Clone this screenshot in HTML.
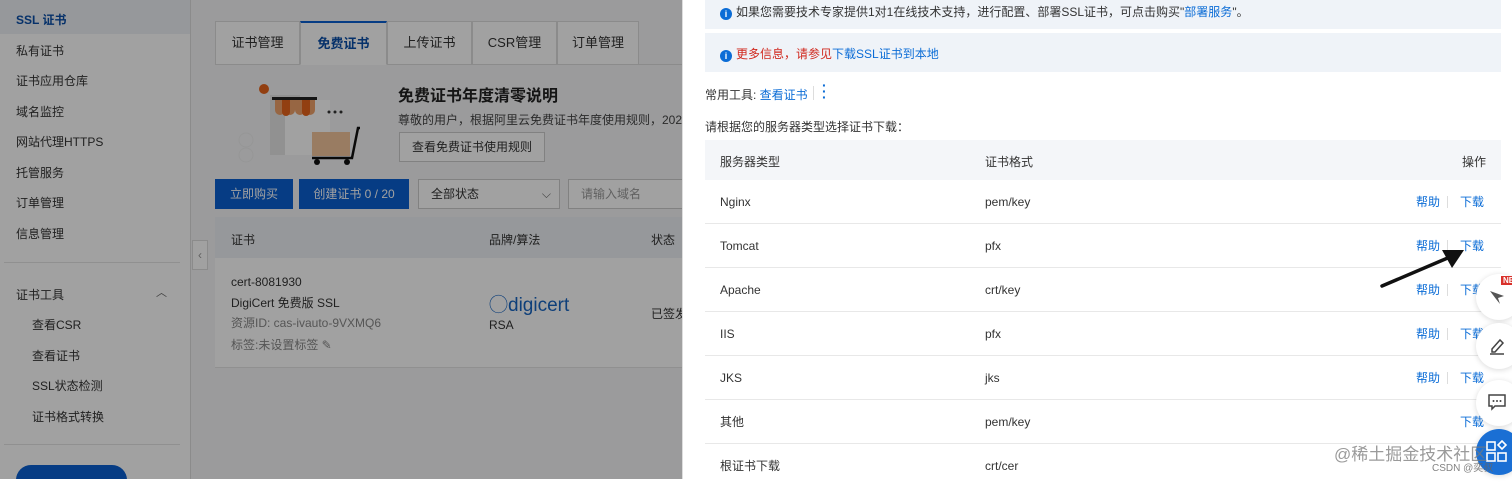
<!DOCTYPE html>
<html><head><meta charset="utf-8"><style>
*{box-sizing:border-box;margin:0;padding:0}
body{width:1512px;height:479px;overflow:hidden;position:relative;font-family:"Liberation Sans","Noto Sans CJK SC",sans-serif;font-size:12px;color:#333;background:#fff}
.a{position:absolute;white-space:nowrap}
#left{position:absolute;left:0;top:0;width:682px;height:479px;background:#f5f6f8;overflow:hidden}
#side{position:absolute;left:0;top:0;width:191px;height:479px;background:#fff;border-right:1px solid #ddd}
.si{position:absolute;left:16px;font-size:12px;color:#333}
.tab{position:absolute;top:21px;height:44px;border:1px solid #ddd;background:#fff;font-size:13px;line-height:42px;text-align:center;color:#333}
.btn{position:absolute;top:179px;height:30px;background:#0b5fd1;color:#fff;line-height:30px;text-align:center;font-size:12px}
#mask{position:absolute;left:0;top:0;width:682px;height:479px;background:rgba(0,0,0,0.37)}
.ban{position:absolute;left:705px;width:796px;background:#eff3f8}
.th{position:absolute;left:705px;top:140px;width:796px;height:40px;background:#f4f6f9}
.row{position:absolute;left:705px;width:796px;height:44px;border-bottom:1px solid #e8e8e8;font-size:12px;color:#333}
.row span{position:absolute;top:0;line-height:44px;height:44px}
.row span.sep{top:16px;width:1px;height:12px;background:#ddd;line-height:0}
.lk{color:#0b6cd6}
.ic{display:inline-block;width:12px;height:12px;border-radius:50%;background:#0b6cd6;color:#fff;font-size:9px;line-height:12px;text-align:center;font-weight:bold;vertical-align:-1px;margin-right:4px}
.circ{position:absolute;left:1476px;width:46px;height:46px;border-radius:50%;background:#fff;box-shadow:0 1px 6px rgba(0,0,0,.15)}
</style></head><body>
<div id="left">
 <div id="side">
  <div class="a" style="left:0;top:0;width:190px;height:34px;background:#eef1f5"></div>
  <div class="si" style="top:11px;color:#0b4fa8;font-weight:bold">SSL 证书</div>
  <div class="si" style="top:42px">私有证书</div>
  <div class="si" style="top:72px">证书应用仓库</div>
  <div class="si" style="top:103px">域名监控</div>
  <div class="si" style="top:133px">网站代理HTTPS</div>
  <div class="si" style="top:164px">托管服务</div>
  <div class="si" style="top:194px">订单管理</div>
  <div class="si" style="top:225px">信息管理</div>
  <div class="a" style="left:4px;top:262px;width:176px;height:1px;background:#e5e5e5"></div>
  <div class="si" style="top:286px">证书工具</div>
  <div class="a" style="left:156px;top:284px;font-size:11px;color:#666">︿</div>
  <div class="si" style="top:316px;left:32px">查看CSR</div>
  <div class="si" style="top:347px;left:32px">查看证书</div>
  <div class="si" style="top:377px;left:32px">SSL状态检测</div>
  <div class="si" style="top:408px;left:32px">证书格式转换</div>
  <div class="a" style="left:4px;top:444px;width:176px;height:1px;background:#e5e5e5"></div>
  <div class="a" style="left:16px;top:465px;width:111px;height:30px;border-radius:15px;background:#0b5fd1"></div>
 </div>
 <div class="a" style="left:192px;top:240px;width:16px;height:30px;background:#fff;border:1px solid #ddd;color:#999;font-size:12px;line-height:28px;text-align:center">‹</div>
 <div class="tab" style="left:215px;width:85px">证书管理</div>
 <div class="tab" style="left:300px;width:87px;color:#0b4fa8;font-weight:bold;border-top:2px solid #0b5fd1;border-bottom-color:#fff">免费证书</div>
 <div class="tab" style="left:387px;width:85px">上传证书</div>
 <div class="tab" style="left:472px;width:85px">CSR管理</div>
 <div class="tab" style="left:557px;width:82px">订单管理</div>
 <div class="a" style="left:639px;top:64px;width:43px;height:1px;background:#ddd"></div>
 <svg class="a" style="left:230px;top:80px" width="130" height="85">
  <rect x="40" y="15" width="30" height="60" fill="#e6e6e6"/>
  <rect x="55" y="20" width="45" height="55" fill="#fff"/>
  <rect x="42" y="17" width="45" height="3" fill="#222"/>
  <path d="M45 20h40v10a5 5 0 0 1-10 0a5 5 0 0 1-10 0a5 5 0 0 1-10 0a5 5 0 0 1-10 0z" fill="#f0a26a"/>
  <path d="M52 20h8v12a4 4 0 0 1-8 0zM72 20h8v12a4 4 0 0 1-8 0z" fill="#e8641b"/>
  <circle cx="34" cy="9" r="5" fill="#e8641b"/>
  <rect x="82" y="52" width="38" height="24" fill="#f3c59c"/>
  <path d="M82 78h40l6-30h5" stroke="#111" stroke-width="2.5" fill="none"/>
  <circle cx="87" cy="82" r="3" fill="#111"/><circle cx="117" cy="82" r="3" fill="#111"/>
  <circle cx="99" cy="32" r="1.5" fill="#333"/><circle cx="105" cy="32" r="1.5" fill="#333"/><circle cx="111" cy="32" r="1.5" fill="#333"/>
  <circle cx="16" cy="60" r="7" fill="none" stroke="#eee"/><circle cx="16" cy="75" r="7" fill="none" stroke="#eee"/>
 </svg>
 <div class="a" style="left:398px;top:82px;font-size:16px;font-weight:bold;color:#222">免费证书年度清零说明</div>
 <div class="a" style="left:398px;top:111px;font-size:12px;color:#444">尊敬的用户，根据阿里云免费证书年度使用规则，2023年</div>
 <div class="a" style="left:399px;top:132px;width:146px;height:30px;border:1px solid #ccc;background:#fff;line-height:28px;text-align:center;color:#333">查看免费证书使用规则</div>
 <div class="btn" style="left:215px;width:78px">立即购买</div>
 <div class="btn" style="left:299px;width:110px">创建证书 0 / 20</div>
 <div class="a" style="left:418px;top:179px;width:142px;height:30px;border:1px solid #ccc;background:#fff;padding-left:12px;line-height:28px;color:#333">全部状态<span style="position:absolute;right:8px;color:#666">⌵</span></div>
 <div class="a" style="left:568px;top:179px;width:120px;height:30px;border:1px solid #ccc;background:#fff;padding-left:12px;line-height:28px;color:#999">请输入域名</div>
 <div class="a" style="left:215px;top:217px;width:467px;height:41px;background:#eef1f5"></div>
 <div class="a" style="left:231px;top:231px">证书</div>
 <div class="a" style="left:489px;top:231px">品牌/算法</div>
 <div class="a" style="left:651px;top:231px">状态</div>
 <div class="a" style="left:215px;top:258px;width:467px;height:110px;background:#fff;border-bottom:1px solid #e5e5e5"></div>
 <div class="a" style="left:231px;top:275px">cert-8081930</div>
 <div class="a" style="left:231px;top:294px">DigiCert 免费版 SSL</div>
 <div class="a" style="left:231px;top:314px;color:#888">资源ID: cas-ivauto-9VXMQ6</div>
 <div class="a" style="left:231px;top:336px;color:#888">标签:未设置标签 ✎</div>
 <div class="a" style="left:489px;top:290px;font-size:19px;color:#1765c1">◯digicert</div>
 <div class="a" style="left:489px;top:318px">RSA</div>
 <div class="a" style="left:651px;top:305px">已签发</div>
</div>
<div id="mask"></div>
<div class="a" style="left:682px;top:0;width:1px;height:479px;background:#ddd"></div>
<div class="ban" style="top:0;height:29px"></div>
<div class="a" style="left:720px;top:3px;font-size:12px;color:#333"><span class="ic">i</span>如果您需要技术专家提供1对1在线技术支持，进行配置、部署SSL证书，可点击购买"<span class="lk">部署服务</span>"。</div>
<div class="ban" style="top:33px;height:39px"></div>
<div class="a" style="left:720px;top:45px;color:#d0281e"><span class="ic">i</span>更多信息，请参见<span class="lk">下载SSL证书到本地</span></div>
<div class="a" style="left:705px;top:86px">常用工具: <span class="lk">查看证书</span></div>
<div class="a" style="left:813px;top:86px;width:1px;height:14px;background:#ddd"></div>
<div class="a" style="left:822px;top:82px;color:#0b6cd6;font-size:14px;font-weight:bold;line-height:6px">·<br>·<br>·</div>
<div class="a" style="left:705px;top:118px">请根据您的服务器类型选择证书下载：</div>
<div class="th"></div>
<div class="a" style="left:720px;top:153px">服务器类型</div>
<div class="a" style="left:985px;top:153px">证书格式</div>
<div class="a" style="left:1462px;top:153px">操作</div>
<div class="row" style="top:180px"><span style="left:15px">Nginx</span><span style="left:280px">pem/key</span><span class="lk" style="left:711px">帮助</span><span class="sep" style="left:742px"></span><span class="lk" style="left:755px">下载</span></div>
<div class="row" style="top:224px"><span style="left:15px">Tomcat</span><span style="left:280px">pfx</span><span class="lk" style="left:711px">帮助</span><span class="sep" style="left:742px"></span><span class="lk" style="left:755px">下载</span></div>
<div class="row" style="top:268px"><span style="left:15px">Apache</span><span style="left:280px">crt/key</span><span class="lk" style="left:711px">帮助</span><span class="sep" style="left:742px"></span><span class="lk" style="left:755px">下载</span></div>
<div class="row" style="top:312px"><span style="left:15px">IIS</span><span style="left:280px">pfx</span><span class="lk" style="left:711px">帮助</span><span class="sep" style="left:742px"></span><span class="lk" style="left:755px">下载</span></div>
<div class="row" style="top:356px"><span style="left:15px">JKS</span><span style="left:280px">jks</span><span class="lk" style="left:711px">帮助</span><span class="sep" style="left:742px"></span><span class="lk" style="left:755px">下载</span></div>
<div class="row" style="top:400px"><span style="left:15px">其他</span><span style="left:280px">pem/key</span><span class="lk" style="left:755px">下载</span></div>
<div class="row" style="top:444px;border:none"><span style="left:15px">根证书下载</span><span style="left:280px">crt/cer</span></div>
<svg class="a" style="left:1378px;top:244px" width="90" height="46"><path d="M4 42L72 13" stroke="#111" stroke-width="3.5" stroke-linecap="round"/><path d="M86 6L64 6L74 24z" fill="#111"/></svg>
<div class="circ" style="top:274px"></div>
<div class="a" style="left:1501px;top:276px;background:#d9312b;color:#fff;font-size:8px;font-weight:bold;padding:0 2px">NE</div>
<svg class="a" style="left:1488px;top:288px" width="18" height="18"><path d="M2 3l14 5-6 2 2 6-4-5z" fill="#555"/></svg>
<div class="circ" style="top:323px"></div>
<svg class="a" style="left:1488px;top:336px" width="18" height="20"><path d="M4 13L12 4l3 3-8 9H4z" fill="none" stroke="#444" stroke-width="1.5"/><path d="M2 18h14" stroke="#444" stroke-width="1.5"/></svg>
<div class="circ" style="top:380px"></div>
<svg class="a" style="left:1488px;top:393px" width="18" height="18"><path d="M1 2h16v11H7l-3 3v-3H1z" fill="none" stroke="#444" stroke-width="1.5"/><circle cx="5.5" cy="8" r="1" fill="#444"/><circle cx="9" cy="8" r="1" fill="#444"/><circle cx="12.5" cy="8" r="1" fill="#444"/></svg>
<div class="circ" style="top:429px;background:#1a6fd4"></div>
<svg class="a" style="left:1485px;top:440px" width="24" height="24"><rect x="2" y="2" width="8" height="8" fill="none" stroke="#fff" stroke-width="1.6"/><rect x="2" y="13" width="8" height="8" fill="none" stroke="#fff" stroke-width="1.6"/><rect x="13" y="13" width="8" height="8" fill="none" stroke="#fff" stroke-width="1.6"/><path d="M17 1l4 4-4 4-4-4z" fill="none" stroke="#fff" stroke-width="1.6"/></svg>
<div class="a" style="left:1334px;top:440px;font-size:17px;color:rgba(120,120,120,.75)">@稀土掘金技术社区</div>
<div class="a" style="left:1432px;top:459px;font-size:10px;color:rgba(100,100,100,.8)">CSDN @奕叔</div>
</body></html>
